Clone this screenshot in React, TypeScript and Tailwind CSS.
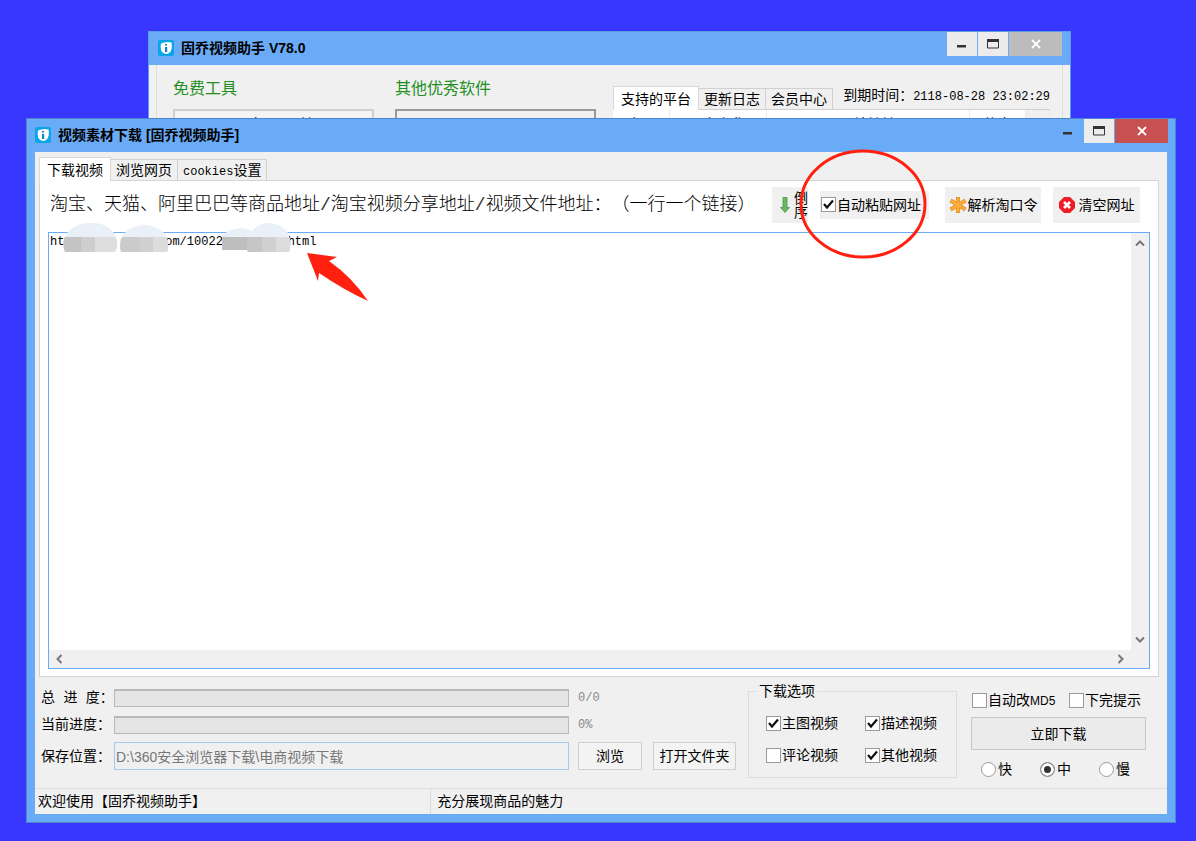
import { useState, type ReactNode } from 'react';

const CHECK = 'M3 7 L6 10.500 L12 3.500';

function AppIcon() {
  return (
    <svg viewBox="0 0 16 16" className="h-4 w-4 shrink-0">
      <rect width="16" height="16" rx="2" fill="#0aa5e6" />
      <path d="M3 3.500Q8 1 13.500 2.500Q14.500 8 12.500 11.500Q10.500 14 8 14Q5 14 3.300 11Q2 7.500 3 3.500Z" fill="#fff" />
      <circle cx="8" cy="4.800" r="1.100" fill="#1186c7" />
      <rect x="7" y="7" width="2.200" height="5" fill="#1186c7" />
    </svg>
  );
}

function CaptionButtons({ active }: { active: boolean }) {
  return (
    <div className="flex h-6 gap-px">
      <button aria-label="最小化" className={`flex w-[30px] items-center justify-center ${active ? '' : 'bg-[#ececec]'}`}>
        <svg viewBox="0 0 12 12" className="h-3 w-3">
          <rect x="1" y="7" width="9" height="2.500" fill="#333" />
        </svg>
      </button>
      <button aria-label="最大化" className="flex w-[30px] items-center justify-center bg-[#ececec]">
        <svg viewBox="0 0 12 10" className="h-[10px] w-3">
          <path d="M.5 1.500h11v7.500h-11z" fill="none" stroke="#333" />
          <rect width="12" height="3" fill="#333" />
        </svg>
      </button>
      <button
        aria-label="关闭"
        className={`flex w-[53px] items-center justify-center ${active ? 'bg-[#c75050]' : 'bg-[#bcbcbc]'}`}
      >
        <svg viewBox="0 0 10 10" className="h-[10px] w-[10px]">
          <path d="M1 1l8 8M9 1l-8 8" stroke="#fff" strokeWidth="1.800" />
        </svg>
      </button>
    </div>
  );
}

function Tab({ active, children }: { active?: boolean; children: ReactNode }) {
  return (
    <button
      role="tab"
      aria-selected={!!active}
      className={
        active
          ? 'relative z-10 -mb-px h-6 border border-b-0 border-[#d9d9d9] bg-white px-[7px] text-sm leading-5'
          : 'h-[21px] border border-b-0 border-l-0 border-[#d0d0d0] bg-[#f0f0f0] px-[5px] text-sm leading-5'
      }
    >
      {children}
    </button>
  );
}

function Check({ label, defaultChecked = false }: { label: ReactNode; defaultChecked?: boolean }) {
  return (
    <label className="flex items-center gap-px text-sm leading-5 whitespace-nowrap">
      <span className="grid">
        <input
          type="checkbox"
          defaultChecked={defaultChecked}
          className="peer h-[15px] w-[15px] appearance-none border border-[#999] bg-white [grid-area:1/1]"
        />
        <svg viewBox="0 0 15 15" className="pointer-events-none invisible h-[15px] w-[15px] peer-checked:visible [grid-area:1/1]">
          <path d={CHECK} fill="none" stroke="#111" strokeWidth="2.200" />
        </svg>
      </span>
      {label}
    </label>
  );
}

function Progress({ id, label, text }: { id: string; label: string; text: string }) {
  return (
    <>
      <label
        htmlFor={id}
        className="font-['Liberation_Mono','Noto_Sans_CJK_SC',monospace] text-sm leading-5 whitespace-pre"
      >
        {label}
      </label>
      <progress
        id={id}
        value={0}
        max={100}
        className="h-[18px] w-full appearance-none border border-t-2 border-[#b9b9b9] bg-[#e5e5e5] [&::-webkit-progress-bar]:bg-[#e5e5e5] [&::-webkit-progress-value]:bg-[#06b025]"
      />
      <span className="font-['Liberation_Mono',monospace] text-xs text-[#888]">{text}</span>
    </>
  );
}

function Slash() {
  return <span className="font-['Liberation_Mono',monospace] text-[#333]">/</span>;
}

function BackWindow() {
  return (
    <section className="absolute top-[31px] right-[125px] left-[148px] h-[400px] border border-[#5b9be8] bg-[#f0f0f0]">
      <header className="flex h-[33px] items-start justify-between bg-[#6aabf7] pr-2 pl-[9px]">
        <div className="flex h-8 items-center gap-[7px]">
          <AppIcon />
          <h2 className="text-sm font-semibold">固乔视频助手 V78.0</h2>
        </div>
        <CaptionButtons active={false} />
      </header>
      <div className="mx-[7px] flex h-full border-x border-[#dedede] pr-3 pl-4">
        <div className="mr-[21px] w-[201px]">
          <h3 className="pt-3 pb-2 text-base leading-6 text-[#1f8f1f]">免费工具</h3>
          <div className="h-20 border-2 border-[#d0d0d0] bg-[#f4f4f4] pt-[3px] text-center text-base">百度 工具箱</div>
        </div>
        <div className="mr-[17px] w-[201px]">
          <h3 className="pt-3 pb-2 text-base leading-6 text-[#1f8f1f]">其他优秀软件</h3>
          <div className="h-20 border-2 border-[#999] bg-[#f0f0f0]" />
        </div>
        <div className="flex-1 pt-[21px]">
          <div className="flex h-6 items-end justify-between border-b border-[#cfcfcf]">
            <div role="tablist" className="flex items-end">
              <Tab active>支持的平台</Tab>
              <Tab>更新日志</Tab>
              <Tab>会员中心</Tab>
            </div>
            <p className="pb-1 text-sm leading-5 whitespace-nowrap">
              到期时间：<span className="font-['Liberation_Mono',monospace] text-xs">2118-08-28 23:02:29</span>
            </p>
          </div>
          <table className="w-full table-fixed bg-white text-sm">
            <thead>
              <tr className="h-7 [&>th]:border-r [&>th]:border-[#e3edf8] [&>th]:font-normal">
                <th className="w-[56px]">序号</th>
                <th className="w-[97px]">平台名称</th>
                <th>网站地址</th>
                <th className="w-[56px]">状态</th>
                <th className="w-6 bg-[#f0f0f0]" />
              </tr>
            </thead>
          </table>
        </div>
      </div>
    </section>
  );
}

function Chevron({ d }: { d: string }) {
  return (
    <svg viewBox="0 0 10 10" className="h-[10px] w-[10px]">
      <path d={d} fill="none" stroke="#777" strokeWidth="2" />
    </svg>
  );
}

// pixelated patches that hide part of the address
function Mosaic() {
  return (
    <svg viewBox="0 0 250 34" className="pointer-events-none absolute -top-[12px] left-[14px] h-[34px] w-[250px]">
      <defs>
        <clipPath id="blobs">
          <path d="M2 31Q-2 20 4 12Q14 1 27 2Q45 1 52 14Q56 24 52 31Z M58 31Q55 22 60 14Q68 4 82 4Q97 5 103 15Q107 24 104 31Z M159 29V15Q165 8 178 7Q188 7 192 14V29Z M185 31Q180 24 185 15Q194 2 205 2Q218 2 225 12Q229 22 226 31Z" />
        </clipPath>
      </defs>
      <g clipPath="url(#blobs)">
        <rect width="250" height="16" fill="#eaf0f8" />
        <rect y="16" width="250" height="18" fill="#d0d0d0" />
        <rect y="16" width="18" height="18" fill="#c4c4c4" />
        <rect x="18" y="16" width="14" height="18" fill="#cecece" />
        <rect x="32" y="16" width="24" height="18" fill="#dedede" />
        <rect x="58" y="16" width="19" height="18" fill="#cbcbcb" />
        <rect x="90" y="16" width="15" height="18" fill="#dcdcdc" />
        <rect x="159" y="16" width="25" height="18" fill="#bebebe" />
        <rect x="184" y="16" width="15" height="18" fill="#c6c6c6" />
        <rect x="213" y="16" width="15" height="18" fill="#dcdcdc" />
      </g>
    </svg>
  );
}

export default function App() {
  const [urls, setUrls] = useState('ht' + ' '.repeat(14) + 'om/100220' + ' '.repeat(8) + 'html');
  const [speed, setSpeed] = useState('中');

  return (
    <main className="relative flex min-h-screen flex-col overflow-hidden bg-[#3737ff] pt-[118px] pr-5 pb-[18px] pl-[26px] font-['Liberation_Sans','Noto_Sans_CJK_SC',sans-serif] text-black">
      <BackWindow />

      <section className="relative flex flex-1 flex-col border border-[#4d86cf] bg-[#6aabf7] px-2 pb-2">
        <header className="-mr-2 flex h-[33px] items-start justify-between pr-[7px]">
          <div className="flex h-8 items-center gap-[7px]">
            <AppIcon />
            <h1 className="text-sm font-semibold">视频素材下载 [固乔视频助手]</h1>
          </div>
          <CaptionButtons active />
        </header>

        <div className="flex flex-1 flex-col bg-[#f0f0f0]">
          <div className="flex flex-1 flex-col px-1 pt-[5px] pr-2">
            <div role="tablist" className="flex items-end">
              <Tab active>下载视频</Tab>
              <Tab>浏览网页</Tab>
              <Tab>
                <span className="font-['Liberation_Mono',monospace] text-xs">cookies</span>设置
              </Tab>
            </div>

            <div className="flex flex-1 flex-col border border-[#d4d4d4] bg-white px-2 pb-[7px]">
              <div className="flex h-[51px] items-center pr-[10px] pb-1">
                <label
                  htmlFor="urls"
                  className="mr-auto pl-[2px] text-lg leading-6 font-light whitespace-nowrap [text-spacing-trim:space-all]"
                >
                  淘宝、天猫、阿里巴巴等商品地址<Slash />淘宝视频分享地址<Slash />视频文件地址：（一行一个链接）
                </label>
                <button className="mr-3 flex h-9 w-9 items-center justify-between bg-[#f0f0f0] pl-2">
                  <svg viewBox="0 0 10 16" className="h-4 w-[10px]">
                    <path d="M3 .5h4v10h2.500L5 15.500.5 10.500H3z" fill="#6cb765" stroke="#3f9440" strokeWidth=".8" />
                  </svg>
                  <span className="w-[14px] text-sm leading-[14px]">倒序</span>
                </button>
                <div className="relative z-10 mr-4 flex h-7 w-[109px] items-center bg-[#f0f0f0] pl-px">
                  <Check label="自动粘贴网址" defaultChecked />
                  <svg viewBox="0 0 130 110" className="pointer-events-none absolute -top-[42px] -left-[21px] h-[110px] w-[130px]">
                    <ellipse cx="64" cy="55" rx="62" ry="53" fill="none" stroke="#ff2010" strokeWidth="3" />
                  </svg>
                </div>
                <button className="mr-3 flex h-9 w-24 items-center justify-center gap-px bg-[#f0f0f0] text-sm whitespace-nowrap">
                  <svg viewBox="0 0 18 18" className="h-[18px] w-[18px]">
                    <path d="M9 1v16M1.500 4.500l15 9M1.500 13.500l15-9" stroke="#e08a1c" strokeWidth="4" />
                    <path d="M9 1.500v15M2 4.800l14 8.400M2 13.200l14-8.400" stroke="#fdab3c" strokeWidth="2.800" />
                  </svg>
                  解析淘口令
                </button>
                <button className="flex h-9 w-[87px] items-center justify-center gap-1 bg-[#f0f0f0] text-sm whitespace-nowrap">
                  <svg viewBox="0 0 16 16" className="h-4 w-4">
                    <path d="M5 0h6l5 5v6l-5 5H5l-5-5V5z" fill="#ee1c25" />
                    <path d="M5 5l6 6M11 5l-6 6" stroke="#fff" strokeWidth="2.600" />
                  </svg>
                  清空网址
                </button>
              </div>

              <div className="relative grid flex-1 grid-cols-[1fr_18px] grid-rows-[1fr_18px] border border-[#6aabf7] bg-[#f0f0f0]">
                <textarea
                  id="urls"
                  value={urls}
                  onChange={(e) => setUrls(e.target.value)}
                  spellCheck={false}
                  wrap="off"
                  className="resize-none overflow-hidden bg-white p-px font-['Liberation_Mono',monospace] text-xs leading-4 outline-none"
                />
                <div className="flex flex-col items-center justify-between py-[5px]">
                  <Chevron d="M1 7.500l4-4 4 4" />
                  <Chevron d="M1 2.500l4 4 4-4" />
                </div>
                <div className="flex items-center justify-between px-[5px]">
                  <Chevron d="M7.500 1l-4 4 4 4" />
                  <Chevron d="M2.500 1l4 4-4 4" />
                </div>
                <Mosaic />
                <svg viewBox="0 0 64 50" className="pointer-events-none absolute top-5 left-[257px] h-[50px] w-16">
                  <path d="M1 0l30 4-8 4Q46 24 62 48Q38 37 13 20L12 28Z" fill="#ff2010" />
                </svg>
              </div>
            </div>
          </div>

          <div className="flex items-start pt-[11px] pr-[21px] pb-[9px] pl-[6px]">
            <div className="mr-3 grid flex-1 grid-cols-[73px_1fr_167px] items-center gap-y-[7px] [&>:nth-child(3n)]:pl-[9px]">
              <Progress id="total" label="总 进 度：" text="0/0" />
              <Progress id="current" label="当前进度：" text="0%" />
              <label htmlFor="path" className="text-sm leading-5">保存位置：</label>
              <input
                id="path"
                readOnly
                value="D:\360安全浏览器下载\电商视频下载"
                className="h-7 w-full min-w-0 border border-[#a5c9f3] bg-[#f0f0f0] px-px text-sm text-[#777] outline-none"
              />
              <div className="flex justify-between">
                <button className="h-7 w-16 border border-[#cfcfcf] bg-[#f3f3f3] text-sm">浏览</button>
                <button className="h-7 w-[83px] border border-[#cfcfcf] bg-[#f3f3f3] text-sm">打开文件夹</button>
              </div>
            </div>

            <fieldset className="-mt-[7px] mr-[14px] w-[209px] border border-[#dcdcdc] pb-3 pl-[17px]">
              <legend className="-ml-[9px] px-[2px] text-sm leading-5">下载选项</legend>
              <div className="grid grid-cols-[99px_1fr] gap-y-3 pt-3">
                <Check label="主图视频" defaultChecked />
                <Check label="描述视频" defaultChecked />
                <Check label="评论视频" />
                <Check label="其他视频" defaultChecked />
              </div>
            </fieldset>

            <div className="w-[175px] pt-[2px]">
              <div className="flex justify-between pr-[5px] pl-px">
                <Check label={<span>自动改<span className="text-xs">MD5</span></span>} />
                <Check label="下完提示" />
              </div>
              <button className="mt-[7px] h-[33px] w-full border border-[#c8c8c8] bg-[#ebebeb] text-sm">立即下载</button>
              <div role="radiogroup" aria-label="速度" className="mt-[9px] flex justify-between pr-4 pl-[10px]">
                {['快', '中', '慢'].map((s) => (
                  <label key={s} className="flex items-center gap-[2px] text-sm leading-5">
                    <input
                      type="radio"
                      name="speed"
                      value={s}
                      checked={speed === s}
                      onChange={() => setSpeed(s)}
                      className="h-[15px] w-[15px] appearance-none rounded-full border border-[#999] bg-white checked:bg-[#333] checked:shadow-[inset_0_0_0_3px_white]"
                    />
                    {s}
                  </label>
                ))}
              </div>
            </div>
          </div>

          <footer className="flex h-[26px] border-t border-[#dcdcdc] text-sm leading-6">
            <span className="w-[35%] border-r border-[#dcdcdc] pl-[3px]">欢迎使用【固乔视频助手】</span>
            <span className="pl-[6px]">充分展现商品的魅力</span>
          </footer>
        </div>
      </section>
    </main>
  );
}
